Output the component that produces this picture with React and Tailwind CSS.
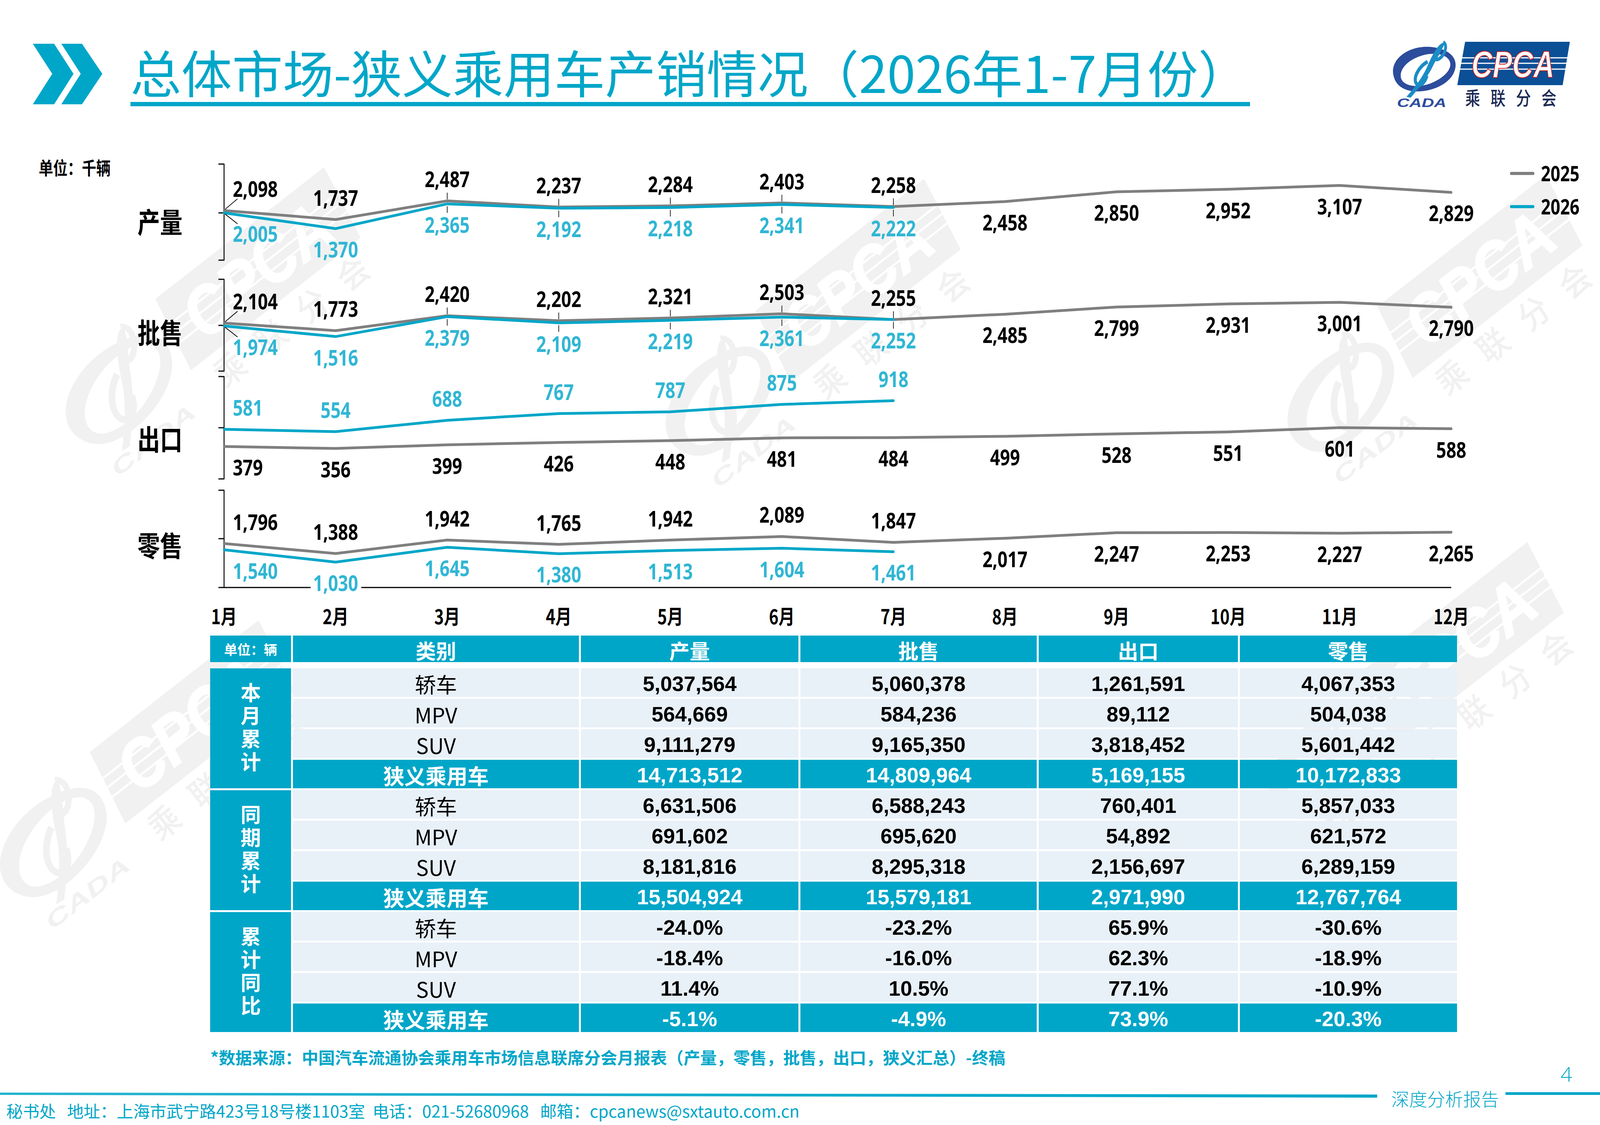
import React from 'react';

const TEAL = '#00a6c8';
const BLUE_LABEL = '#31b6d4';
const GRAY = '#7f7f7f';
const CJK = "'Noto Sans CJK SC', sans-serif";
const NUM = "'Open Sans', 'Noto Sans CJK SC', sans-serif";

function Logo({ mono = false, className = '' }) {
  const ring = mono ? '#000' : '#2c4c9c';
  const phi = mono ? '#000' : '#1b8cc6';
  const para = mono ? '#000' : '#0b4f96';
  const txt = mono ? '#000' : '#1c2a55';
  return (
    <svg viewBox="0 0 571 186" preserveAspectRatio="none" className={className}>
      <path
        fillRule="evenodd"
        fill={ring}
        d="M2,92 C-6,48 60,18 120,22 C176,26 214,48 198,84 C186,114 130,138 72,136 C34,134 8,120 2,92 Z M26,96 C26,120 70,128 112,118 C158,106 190,82 184,62 C178,42 140,36 104,42 C60,50 26,72 26,96 Z"
      />
      <path d="M166,12 C150,8 128,40 110,74 C92,106 64,132 44,150 L58,152 C82,130 108,104 126,76 C142,50 162,26 166,12 Z" fill={phi} />
      <path d="M162,10 C176,16 170,40 150,52 C138,58 132,52 140,40" fill="none" stroke={phi} strokeWidth="9" />
      <path d="M112,60 C84,72 62,104 78,118 C88,126 104,112 110,96" fill="none" stroke={phi} strokeWidth="10" />
      <text x="14" y="176" fontSize="31" fontWeight="700" fontStyle="italic" fill={ring} fontFamily="'Liberation Sans', sans-serif" textLength="158" lengthAdjust="spacingAndGlyphs">CADA</text>
      <polygon points="232,9 567,9 544,120 207,120" fill={para} />
      <line x1="222" y1="50" x2="561" y2="50" stroke="#fff" strokeWidth="3" />
      <line x1="219" y1="64" x2="558" y2="64" stroke="#fff" strokeWidth="3" />
      <line x1="216" y1="79" x2="555" y2="79" stroke="#fff" strokeWidth="3" />
      <text x="252" y="100" fontSize="96" fontWeight="700" fontStyle="italic" fill="#fff" stroke={mono ? '#fff' : '#d42020'} strokeWidth="2" fontFamily="'Liberation Sans', sans-serif" textLength="266" lengthAdjust="spacingAndGlyphs">CPCA</text>
      <text x="232" y="171" fontSize="48" fontWeight="500" fill={txt} fontFamily={CJK} textLength="292" lengthAdjust="spacing">乘联分会</text>
    </svg>
  );
}

function Chevrons() {
  return (
    <svg viewBox="0 0 222 155" preserveAspectRatio="none" className="block w-[178px] h-[155px] shrink-0">
      <polygon points="0,0 68,0 130,77 68,155 0,155 62,77" fill={TEAL} />
      <polygon points="91,0 157,0 222,77 157,155 91,155 153,77" fill={TEAL} />
    </svg>
  );
}

const gray = {
  P: [2098, 1737, 2487, 2237, 2284, 2403, 2258, 2458, 2850, 2952, 3107, 2829],
  B: [2104, 1773, 2420, 2202, 2321, 2503, 2255, 2485, 2799, 2931, 3001, 2790],
  E: [379, 356, 399, 426, 448, 481, 484, 499, 528, 551, 601, 588],
  R: [1796, 1388, 1942, 1765, 1942, 2089, 1847, 2017, 2247, 2253, 2227, 2265],
};
const blue = {
  P: [2005, 1370, 2365, 2192, 2218, 2341, 2222],
  B: [1974, 1516, 2379, 2109, 2219, 2361, 2252],
  E: [581, 554, 688, 767, 787, 875, 918],
  R: [1540, 1030, 1645, 1380, 1513, 1604, 1461],
};

const panels = [
  { k: 'P', name: '产量', nameY: 569, y: (v) => 672.6 - 0.0637 * v, ticks: [420, 545, 666], leaders: true },
  { k: 'B', name: '批售', nameY: 852, y: (v) => 951 - 0.059 * v, ticks: [715, 833, 950], leaders: true },
  { k: 'E', name: '出口', nameY: 1125, y: (v) => 1225.5 - 0.2175 * v, ticks: [964, 1095, 1226], blueAbove: true },
  { k: 'R', name: '零售', nameY: 1397, y: (v) => 1503 - 0.062 * v, ticks: [1255, 1379], bottom: 1504 },
];

const X = (i) => 717 + 357 * i;
const fmt = (v) => v.toLocaleString('en-US');

function Label({ i, cy, v, color }) {
  const first = i === 0;
  return (
    <text
      x={first ? 745 : X(i)}
      y={cy + 20}
      textAnchor={first ? 'start' : 'middle'}
      fontSize="56"
      fontWeight="700"
      fill={color}
      fontFamily={NUM}
    >
      {fmt(v)}
    </text>
  );
}

function Chart() {
  const months = ['1月', '2月', '3月', '4月', '5月', '6月', '7月', '8月', '9月', '10月', '11月', '12月'];
  return (
    <svg viewBox="0 395 5120 1232" preserveAspectRatio="none" className="block w-[4096px] h-[1232px] shrink-0">
      <text x="124" y="447" fontSize="46" fontWeight="700" fill="#000" fontFamily={CJK}>单位：千辆</text>

      {panels.map((p) => {
        const top = p.ticks[0];
        const bot = p.bottom || p.ticks[p.ticks.length - 1];
        const g = gray[p.k];
        const b = blue[p.k];
        const gp = g.map((v, i) => `${X(i)},${p.y(v).toFixed(1)}`).join(' ');
        const bp = b.map((v, i) => `${X(i)},${p.y(v).toFixed(1)}`).join(' ');
        return (
          <g key={p.k}>
            <text x="440" y={p.nameY + 27} fontSize="72" fontWeight="700" fill="#000" fontFamily={CJK}>{p.name}</text>
            <line x1="717" y1={top} x2="717" y2={bot} stroke="#000" strokeWidth="3" />
            {p.ticks.map((t) => (
              <line key={t} x1="699" y1={t} x2="718" y2={t} stroke="#000" strokeWidth="3" />
            ))}
            <polyline points={gp} fill="none" stroke={GRAY} strokeWidth="7" strokeLinecap="round" strokeLinejoin="round" />
            <polyline points={bp} fill="none" stroke={TEAL} strokeWidth="7" strokeLinecap="round" strokeLinejoin="round" />
            {p.leaders && (
              <g stroke="#000" strokeWidth="2">
                <line x1="720" y1={p.y(g[0]) - 3} x2="760" y2={p.y(g[0]) - 30} />
                <line x1="720" y1={p.y(b[0]) + 3} x2="760" y2={p.y(b[0]) + 28} />
                {[2, 3, 4, 5, 6].map((i) => (
                  <g key={i}>
                    <line x1={X(i)} y1={p.y(g[i]) - 21} x2={X(i)} y2={p.y(g[i]) - 4} />
                    <line x1={X(i)} y1={p.y(b[i]) + 6} x2={X(i)} y2={p.y(b[i]) + 23} />
                  </g>
                ))}
              </g>
            )}
            {g.map((v, i) => {
              const pt = p.y(v);
              const above = p.blueAbove ? false : i <= 6;
              return <Label key={'g' + i} i={i} v={v} cy={above ? pt - 55 : pt + 54} color="#000" />;
            })}
            {b.map((v, i) => {
              const pt = p.y(v);
              return <Label key={'b' + i} i={i} v={v} cy={p.blueAbove ? pt - 55 : pt + 54} color={BLUE_LABEL} />;
            })}
          </g>
        );
      })}

      <line x1="699" y1="1504" x2="994" y2="1504" stroke="#000" strokeWidth="3" />
      <line x1="1156" y1="1504" x2="4644" y2="1504" stroke="#000" strokeWidth="3" />

      {months.map((m, i) => (
        <text key={m} x={X(i)} y="1598" textAnchor="middle" fontSize="52" fontWeight="700" fill="#000" fontFamily={CJK}>{m}</text>
      ))}

      <line x1="4836" y1="444" x2="4906" y2="444" stroke={GRAY} strokeWidth="8" strokeLinecap="round" />
      <text x="4931" y="464" fontSize="54" fontWeight="700" fill="#000" fontFamily={NUM}>2025</text>
      <line x1="4836" y1="529" x2="4906" y2="529" stroke={TEAL} strokeWidth="8" strokeLinecap="round" />
      <text x="4931" y="549" fontSize="54" fontWeight="700" fill="#000" fontFamily={NUM}>2026</text>
    </svg>
  );
}

const groups = [
  {
    label: '本月累计',
    rows: [
      ['轿车', '5,037,564', '5,060,378', '1,261,591', '4,067,353'],
      ['MPV', '564,669', '584,236', '89,112', '504,038'],
      ['SUV', '9,111,279', '9,165,350', '3,818,452', '5,601,442'],
      ['狭义乘用车', '14,713,512', '14,809,964', '5,169,155', '10,172,833'],
    ],
  },
  {
    label: '同期累计',
    rows: [
      ['轿车', '6,631,506', '6,588,243', '760,401', '5,857,033'],
      ['MPV', '691,602', '695,620', '54,892', '621,572'],
      ['SUV', '8,181,816', '8,295,318', '2,156,697', '6,289,159'],
      ['狭义乘用车', '15,504,924', '15,579,181', '2,971,990', '12,767,764'],
    ],
  },
  {
    label: '累计同比',
    rows: [
      ['轿车', '-24.0%', '-23.2%', '65.9%', '-30.6%'],
      ['MPV', '-18.4%', '-16.0%', '62.3%', '-18.9%'],
      ['SUV', '11.4%', '10.5%', '77.1%', '-10.9%'],
      ['狭义乘用车', '-5.1%', '-4.9%', '73.9%', '-20.3%'],
    ],
  },
];

function Table() {
  const headers = ['类别', '产量', '批售', '出口', '零售'];
  return (
    <div className="ml-[538.4px] w-[3191.2px] shrink-0">
      <div className="grid grid-cols-[206.4px_732.8px_556.8px_605.6px_509.6px_556px] gap-x-[4.8px] h-[68px]">
        <div className="bg-[#00a6c8] flex items-center justify-center text-white font-bold text-[34px] leading-none font-['Noto_Sans_CJK_SC',sans-serif] pt-[2px]">
          单位：辆
        </div>
        {headers.map((h) => (
          <div key={h} className="bg-[#00a6c8] flex items-center justify-center text-white font-bold text-[52px] leading-none font-['Noto_Sans_CJK_SC',sans-serif] pt-[8px]">
            {h}
          </div>
        ))}
      </div>
      <div className="mt-[16px] grid grid-cols-[206.4px_732.8px_556.8px_605.6px_509.6px_556px] grid-rows-[repeat(12,73px)] gap-x-[4.8px] gap-y-[5px]">
        {groups.map((g, gi) => (
          <React.Fragment key={gi}>
            <div className="row-span-4 bg-[#00a6c8] flex items-center justify-center">
              <span className="[writing-mode:vertical-rl] tracking-[7px] text-white font-bold text-[52px] leading-none font-['Noto_Sans_CJK_SC',sans-serif]">
                {g.label}
              </span>
            </div>
            {g.rows.map((r, ri) => {
              const total = ri === 3;
              return (
                <React.Fragment key={ri}>
                  <div
                    className={
                      total
                        ? "bg-[#00a6c8] flex items-center justify-center text-white font-bold text-[54px] leading-none font-['Noto_Sans_CJK_SC',sans-serif] pt-[6px]"
                        : "bg-[#e8f0f8] flex items-center justify-center text-black font-normal text-[54px] leading-none font-['Noto_Sans_CJK_SC',sans-serif] pt-[6px]"
                    }
                  >
                    {r[0]}
                  </div>
                  {r.slice(1).map((n, ni) => (
                    <div
                      key={ni}
                      className={
                        total
                          ? "bg-[#00a6c8] flex items-center justify-center text-white font-bold text-[54px] leading-none font-['Liberation_Sans',Arial,sans-serif] pt-[5px]"
                          : "bg-[#e8f0f8] flex items-center justify-center text-black font-bold text-[54px] leading-none font-['Liberation_Sans',Arial,sans-serif] pt-[5px]"
                      }
                    >
                      {n}
                    </div>
                  ))}
                </React.Fragment>
              );
            })}
          </React.Fragment>
        ))}
      </div>
    </div>
  );
}

function Watermark({ cx, cy }) {
  return (
    <div className="absolute w-[934px] h-[335px] rotate-[-38deg] opacity-[0.05]" style={{ left: cx - 467, top: cy - 167 }}>
      <Logo mono className="block w-full h-full" />
    </div>
  );
}

export default function App() {
  const marks = [
    [560, 830],
    [2096, 860],
    [3688, 850],
    [3640, 1790],
    [392, 1990],
  ];
  return (
    <div className="relative w-[4096px] h-[2880px] overflow-hidden bg-white">
      <div className="absolute inset-0">
        {marks.map(([x, y], i) => (
          <Watermark key={i} cx={x} cy={y} />
        ))}
      </div>

      <div className="relative flex flex-col w-[4096px] h-[2880px]">
        {/* Header */}
        <div className="flex items-start h-[395px] shrink-0">
          <div className="ml-[84px] mt-[112px]">
            <Chevrons />
          </div>
          <div className="ml-[72px] mt-[116px] w-[2866px] border-b-[11px] border-[#00a6c8] pb-[15px]">
            <div className="text-[130px] leading-[130px] text-[#00a6c8] whitespace-nowrap font-['Noto_Sans_CJK_SC',sans-serif] font-normal">
              总体市场-狭义乘用车产销情况（2026年1-7月份）
            </div>
          </div>
          <div className="ml-auto mr-[74px] mt-[98px]">
            <Logo className="block w-[457px] h-[186px]" />
          </div>
        </div>

        <Chart />

        <Table />

        {/* Note row */}
        <div className="flex items-start justify-between h-[140px] shrink-0">
          <div className="ml-[538.4px] mt-[38px] text-[42.5px] leading-[52px] font-bold text-[#00a6c8] whitespace-nowrap font-['Noto_Sans_CJK_SC',sans-serif]">
            *数据来源：中国汽车流通协会乘用车市场信息联席分会月报表（产量，零售，批售，出口，狭义汇总）-终稿
          </div>
          <div className="mr-[71px] mt-[81px] text-[52px] leading-[52px] font-light text-[#00a6c8] font-['Open_Sans',sans-serif]">
            4
          </div>
        </div>

        {/* Footer */}
        <div className="flex items-start h-[98px] shrink-0">
          <div className="w-[3525.6px] shrink-0 flex flex-col">
            <svg viewBox="0 0 4407 30" preserveAspectRatio="none" className="block w-[3525.6px] h-[30px]">
              <defs>
                <linearGradient id="fl" x1="0" y1="0" x2="1" y2="0">
                  <stop offset="0" stopColor="#00a6c8" stopOpacity="0.85" />
                  <stop offset="1" stopColor="#00a6c8" />
                </linearGradient>
              </defs>
              <polygon points="0,15 4407,20 4407,28 0,21" fill="url(#fl)" />
            </svg>
            <div className="mt-[4px] pl-[16px] text-[42.4px] leading-[53px] text-[#00a6c8] whitespace-nowrap font-['Noto_Sans_CJK_SC',sans-serif]">
              秘书处&nbsp;&nbsp;&nbsp;地址：上海市武宁路423号18号楼1103室&nbsp;&nbsp;电话：021-52680968&nbsp;&nbsp;&nbsp;邮箱：cpcanews@sxtauto.com.cn
            </div>
          </div>
          <div className="ml-[36px] mt-[3px] text-[46px] leading-[52px] text-[#00a6c8] whitespace-nowrap font-['Noto_Sans_CJK_SC',sans-serif] font-light">
            深度分析报告
          </div>
          <div className="flex-1 ml-[16px] mt-[14px] h-[7px] bg-[#00a6c8]" />
        </div>
      </div>
    </div>
  );
}
